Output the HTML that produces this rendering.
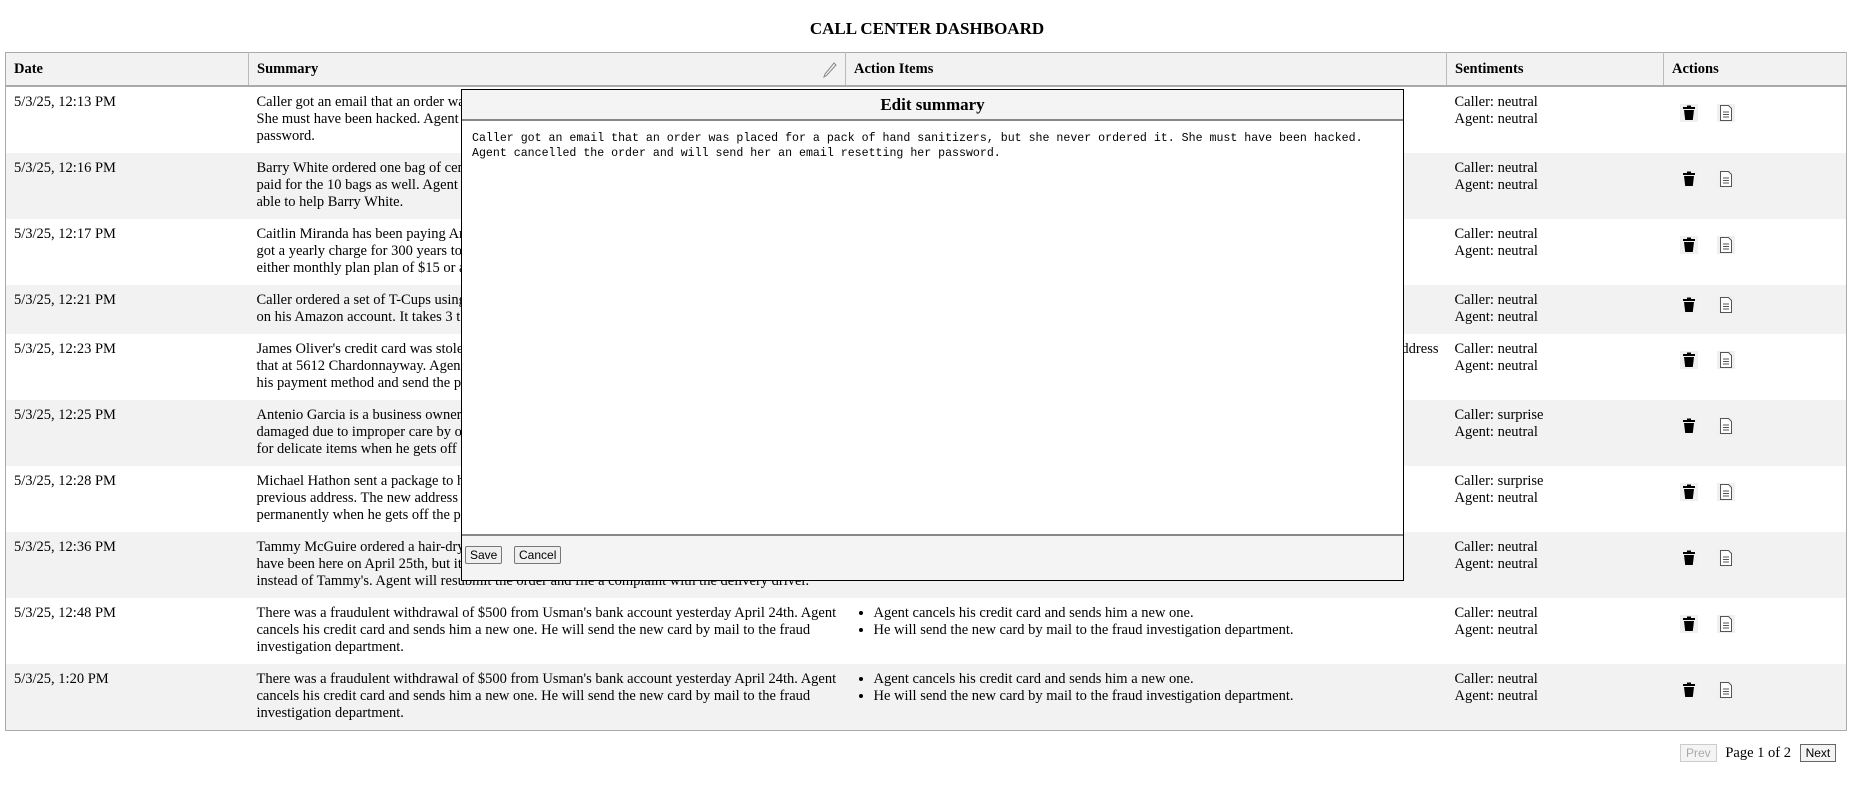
<!DOCTYPE html>
<html><head><meta charset="utf-8"><style>
body{margin:0;width:1854px;height:806px;background:#fff;font-family:"Liberation Serif",serif;font-size:14.5px;color:#000;position:relative;overflow:hidden}
h1{position:absolute;top:19px;left:0;width:1854px;text-align:center;font-size:17px;margin:0;font-weight:bold}
table{position:absolute;left:5px;top:52px;width:1842px;border-collapse:collapse;table-layout:fixed;border:1px solid #aaa}
th{background:#f2f2f2;text-align:left;height:32px;padding:0 8px;border:1px solid #bbb;border-width:0 1px 2px 0;font-size:14.5px;border-bottom:2px solid #aaa;position:relative}
td{vertical-align:top;padding:7px 8px 8px;line-height:17px;white-space:nowrap;overflow:hidden}
tr.g td{background:#f2f2f2}
ul{margin:0;padding-left:20px}
.ic{display:inline-block;width:18px;height:18px;background:#f0f0f0;vertical-align:top;margin-top:10px}
.modal{position:absolute;left:461px;top:89px;width:943px;height:492px;border:1px solid #000;background:#fff;box-sizing:border-box}
.mh{height:29px;background:#f4f4f4;border-bottom:2px solid #888;text-align:center;font-weight:bold;font-size:17px;line-height:29px}
.mt{font-family:"Liberation Mono",monospace;font-size:11.6px;line-height:15px;padding:10px 10px;height:416px;box-sizing:border-box;white-space:pre}
.mf{position:absolute;left:0;right:0;bottom:0;height:44px;background:#f4f4f4;border-top:2px solid #888}
button{font-family:"Liberation Sans",sans-serif;font-size:12px;padding:0 4px;height:18px;border:1px solid #777;background:#efefef;position:absolute;top:10px;border-radius:2px}
</style></head><body>
<h1>CALL CENTER DASHBOARD</h1>
<table>
<colgroup><col style="width:243px"><col style="width:597px"><col style="width:601px"><col style="width:217px"><col></colgroup>
<tr><th>Date</th><th>Summary<svg style="position:absolute;right:8px;top:9px" width="14" height="16" viewBox="0 0 14 16"><path d="M11 1 L13 3 L4 13 L1 15 L2 12 Z" fill="none" stroke="#888" stroke-width="1"/></svg></th><th>Action Items</th><th>Sentiments</th><th>Actions</th></tr>
<tr><td>5/3/25, 12:13 PM</td><td>Caller got an email that an order was<br>She must have been hacked. Agent<br>password.</td><td></td><td>Caller: neutral<br>Agent: neutral</td><td><span class="ic" style="margin-left:8px"><svg width="18" height="18"><rect x="3" y="3" width="12" height="2" fill="#000"/><rect x="7" y="1.5" width="4" height="2" fill="#000"/><path d="M4 6h10l-1.2 10H5.2z" fill="#000"/></svg></span><span class="ic" style="margin-left:19px"><svg width="18" height="18"><path d="M3.5 1.5h8l3 3v12h-11z" fill="#fff" stroke="#555"/><path d="M6 8h6M6 10.5h6M6 13h6" stroke="#555"/></svg></span></td></tr>
<tr class="g"><td>5/3/25, 12:16 PM</td><td>Barry White ordered one bag of cem<br>paid for the 10 bags as well. Agent<br>able to help Barry White.</td><td></td><td>Caller: neutral<br>Agent: neutral</td><td><span class="ic" style="margin-left:8px"><svg width="18" height="18"><rect x="3" y="3" width="12" height="2" fill="#000"/><rect x="7" y="1.5" width="4" height="2" fill="#000"/><path d="M4 6h10l-1.2 10H5.2z" fill="#000"/></svg></span><span class="ic" style="margin-left:19px"><svg width="18" height="18"><path d="M3.5 1.5h8l3 3v12h-11z" fill="#fff" stroke="#555"/><path d="M6 8h6M6 10.5h6M6 13h6" stroke="#555"/></svg></span></td></tr>
<tr><td>5/3/25, 12:17 PM</td><td>Caitlin Miranda has been paying Am<br>got a yearly charge for 300 years to<br>either monthly plan plan of $15 or a</td><td></td><td>Caller: neutral<br>Agent: neutral</td><td><span class="ic" style="margin-left:8px"><svg width="18" height="18"><rect x="3" y="3" width="12" height="2" fill="#000"/><rect x="7" y="1.5" width="4" height="2" fill="#000"/><path d="M4 6h10l-1.2 10H5.2z" fill="#000"/></svg></span><span class="ic" style="margin-left:19px"><svg width="18" height="18"><path d="M3.5 1.5h8l3 3v12h-11z" fill="#fff" stroke="#555"/><path d="M6 8h6M6 10.5h6M6 13h6" stroke="#555"/></svg></span></td></tr>
<tr class="g"><td>5/3/25, 12:21 PM</td><td>Caller ordered a set of T-Cups using<br>on his Amazon account. It takes 3 t</td><td></td><td>Caller: neutral<br>Agent: neutral</td><td><span class="ic" style="margin-left:8px;margin-top:4px"><svg width="18" height="18"><rect x="3" y="3" width="12" height="2" fill="#000"/><rect x="7" y="1.5" width="4" height="2" fill="#000"/><path d="M4 6h10l-1.2 10H5.2z" fill="#000"/></svg></span><span class="ic" style="margin-left:19px;margin-top:4px"><svg width="18" height="18"><path d="M3.5 1.5h8l3 3v12h-11z" fill="#fff" stroke="#555"/><path d="M6 8h6M6 10.5h6M6 13h6" stroke="#555"/></svg></span></td></tr>
<tr><td>5/3/25, 12:23 PM</td><td>James Oliver's credit card was stole<br>that at 5612 Chardonnayway. Agen<br>his payment method and send the p</td><td style="text-align:right">address</td><td>Caller: neutral<br>Agent: neutral</td><td><span class="ic" style="margin-left:8px"><svg width="18" height="18"><rect x="3" y="3" width="12" height="2" fill="#000"/><rect x="7" y="1.5" width="4" height="2" fill="#000"/><path d="M4 6h10l-1.2 10H5.2z" fill="#000"/></svg></span><span class="ic" style="margin-left:19px"><svg width="18" height="18"><path d="M3.5 1.5h8l3 3v12h-11z" fill="#fff" stroke="#555"/><path d="M6 8h6M6 10.5h6M6 13h6" stroke="#555"/></svg></span></td></tr>
<tr class="g"><td>5/3/25, 12:25 PM</td><td>Antenio Garcia is a business owner<br>damaged due to improper care by o<br>for delicate items when he gets off</td><td></td><td>Caller: surprise<br>Agent: neutral</td><td><span class="ic" style="margin-left:8px"><svg width="18" height="18"><rect x="3" y="3" width="12" height="2" fill="#000"/><rect x="7" y="1.5" width="4" height="2" fill="#000"/><path d="M4 6h10l-1.2 10H5.2z" fill="#000"/></svg></span><span class="ic" style="margin-left:19px"><svg width="18" height="18"><path d="M3.5 1.5h8l3 3v12h-11z" fill="#fff" stroke="#555"/><path d="M6 8h6M6 10.5h6M6 13h6" stroke="#555"/></svg></span></td></tr>
<tr><td>5/3/25, 12:28 PM</td><td>Michael Hathon sent a package to h<br>previous address. The new address<br>permanently when he gets off the p</td><td></td><td>Caller: surprise<br>Agent: neutral</td><td><span class="ic" style="margin-left:8px"><svg width="18" height="18"><rect x="3" y="3" width="12" height="2" fill="#000"/><rect x="7" y="1.5" width="4" height="2" fill="#000"/><path d="M4 6h10l-1.2 10H5.2z" fill="#000"/></svg></span><span class="ic" style="margin-left:19px"><svg width="18" height="18"><path d="M3.5 1.5h8l3 3v12h-11z" fill="#fff" stroke="#555"/><path d="M6 8h6M6 10.5h6M6 13h6" stroke="#555"/></svg></span></td></tr>
<tr class="g"><td>5/3/25, 12:36 PM</td><td>Tammy McGuire ordered a hair-dry<br>have been here on April 25th, but it<br>instead of Tammy's. Agent will resubmit the order and file a complaint with the delivery driver.</td><td></td><td>Caller: neutral<br>Agent: neutral</td><td><span class="ic" style="margin-left:8px"><svg width="18" height="18"><rect x="3" y="3" width="12" height="2" fill="#000"/><rect x="7" y="1.5" width="4" height="2" fill="#000"/><path d="M4 6h10l-1.2 10H5.2z" fill="#000"/></svg></span><span class="ic" style="margin-left:19px"><svg width="18" height="18"><path d="M3.5 1.5h8l3 3v12h-11z" fill="#fff" stroke="#555"/><path d="M6 8h6M6 10.5h6M6 13h6" stroke="#555"/></svg></span></td></tr>
<tr><td>5/3/25, 12:48 PM</td><td>There was a fraudulent withdrawal of $500 from Usman's bank account yesterday April 24th. Agent<br>cancels his credit card and sends him a new one. He will send the new card by mail to the fraud<br>investigation department.</td><td><ul><li>Agent cancels his credit card and sends him a new one.</li><li>He will send the new card by mail to the fraud investigation department.</li></ul></td><td>Caller: neutral<br>Agent: neutral</td><td><span class="ic" style="margin-left:8px"><svg width="18" height="18"><rect x="3" y="3" width="12" height="2" fill="#000"/><rect x="7" y="1.5" width="4" height="2" fill="#000"/><path d="M4 6h10l-1.2 10H5.2z" fill="#000"/></svg></span><span class="ic" style="margin-left:19px"><svg width="18" height="18"><path d="M3.5 1.5h8l3 3v12h-11z" fill="#fff" stroke="#555"/><path d="M6 8h6M6 10.5h6M6 13h6" stroke="#555"/></svg></span></td></tr>
<tr class="g"><td>5/3/25, 1:20 PM</td><td>There was a fraudulent withdrawal of $500 from Usman's bank account yesterday April 24th. Agent<br>cancels his credit card and sends him a new one. He will send the new card by mail to the fraud<br>investigation department.</td><td><ul><li>Agent cancels his credit card and sends him a new one.</li><li>He will send the new card by mail to the fraud investigation department.</li></ul></td><td>Caller: neutral<br>Agent: neutral</td><td><span class="ic" style="margin-left:8px"><svg width="18" height="18"><rect x="3" y="3" width="12" height="2" fill="#000"/><rect x="7" y="1.5" width="4" height="2" fill="#000"/><path d="M4 6h10l-1.2 10H5.2z" fill="#000"/></svg></span><span class="ic" style="margin-left:19px"><svg width="18" height="18"><path d="M3.5 1.5h8l3 3v12h-11z" fill="#fff" stroke="#555"/><path d="M6 8h6M6 10.5h6M6 13h6" stroke="#555"/></svg></span></td></tr>
</table>
<div class="modal"><div class="mh">Edit summary</div><div class="mt">Caller got an email that an order was placed for a pack of hand sanitizers, but she never ordered it. She must have been hacked.
Agent cancelled the order and will send her an email resetting her password.</div><div class="mf"><button style="left:3px">Save</button><button style="left:52px">Cancel</button></div></div>
<div style="position:absolute;top:744px;left:1680px;font-size:14.5px">
<span style="display:inline-block;border:1px solid #ccc;color:#aaa;font-family:'Liberation Sans',sans-serif;font-size:12px;padding:1px 5px;background:#f4f4f4">Prev</span>
<span style="margin:0 5px">Page 1 of 2</span>
<span style="display:inline-block;border:1px solid #666;font-family:'Liberation Sans',sans-serif;font-size:12px;padding:1px 5px;background:#f4f4f4">Next</span></div>
</body></html>
